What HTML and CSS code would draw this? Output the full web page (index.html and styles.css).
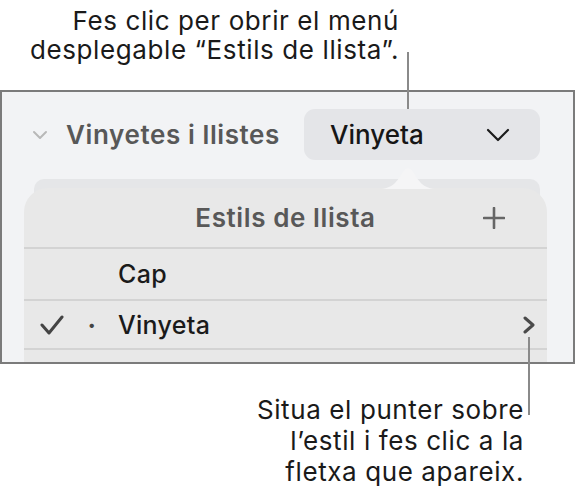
FILE: index.html
```html
<!DOCTYPE html>
<html lang="ca">

<head>
    <meta charset="UTF-8">
    <meta name="viewport" content="width=device-width, initial-scale=1.0">
    <title>Estils de llista</title>
    <link rel="stylesheet" href="styles.css">
</head>

<body>

    <div class="shot">
        <div class="callout callout-top">
            <p>Fes clic per obrir el menú<br>desplegable “Estils de llista”.</p>
        </div>

        <div class="frame">
            <div class="section-head">
                <svg class="disclosure" width="16" height="10" viewBox="0 0 16 10">
                    <path d="M2 2 L8 8 L14 2" fill="none" stroke="#b8b8b8" stroke-width="2" stroke-linecap="round" stroke-linejoin="round"/>
                </svg>
                <span class="section-title">Vinyetes i llistes</span>
                <div class="popup">
                    <span>Vinyeta</span>
                    <svg width="24" height="14" viewBox="0 0 24 14">
                        <path d="M2 2 L12 12 L22 2" fill="none" stroke="#1c1c1c" stroke-width="2.2" stroke-linecap="round" stroke-linejoin="round"/>
                    </svg>
                </div>
            </div>

            <div class="popover">
                <svg class="tip" width="58" height="22" viewBox="0 0 58 22">
                    <path d="M0 22 C14 22 18 14 24 5 C27 0 31 0 34 5 C40 14 44 22 58 22 Z" fill="#f5f5f6"/>
                </svg>
                <div class="card-back"></div>
                <div class="card">
                    <div class="card-head">
                        <span class="card-title">Estils de llista</span>
                        <svg class="plus" width="22" height="22" viewBox="0 0 22 22">
                            <path d="M11 1 V21 M1 11 H21" stroke="#666" stroke-width="2.6" stroke-linecap="round"/>
                        </svg>
                    </div>
                    <div class="row">
                        <span class="mark"></span>
                        <span class="bullet"></span>
                        <span class="label">Cap</span>
                    </div>
                    <div class="row row-short">
                        <svg class="mark" width="24" height="20" viewBox="0 0 24 20">
                            <path d="M2 10 L9 18 L22 2" fill="none" stroke="#444" stroke-width="3" stroke-linecap="round" stroke-linejoin="round"/>
                        </svg>
                        <span class="bullet">•</span>
                        <span class="label">Vinyeta</span>
                        <svg class="more" width="14" height="18" viewBox="0 0 14 18">
                            <path d="M3 2 L11 9 L3 16" fill="none" stroke="#4a4a4a" stroke-width="3" stroke-linecap="round" stroke-linejoin="round"/>
                        </svg>
                    </div>
                    <div class="row"></div>
                </div>
            </div>
        </div>

        <div class="callout callout-bottom">
            <p>Situa el punter sobre<br>l’estil i fes clic a la<br>fletxa que apareix.</p>
        </div>

        <!-- leader lines sit on top of the frame -->
        <span class="leader leader-top"></span>
        <span class="leader leader-bottom"></span>
    </div>

</body>

</html>
```

FILE: styles.css
```css
/* Page */
body {
    margin: 0;
    padding: 0;
    background-color: #fff;
    font-family: Inter, Roboto, 'Liberation Sans', sans-serif;
    color: #1a1a1a;
}

.shot {
    position: relative;
    width: 575px;
    height: 495px;
    overflow: hidden;
}

/* Callout texts */
.callout p {
    margin: 0;
    font-size: 26px;
    letter-spacing: 0.6px;
    line-height: 29px;
    text-align: right;
}

.callout-top {
    height: 90px;
    box-sizing: border-box;
    padding-top: 6px;
    width: 399px;
}

.callout-bottom {
    width: 524px;
    padding-top: 30px;
}

.callout-bottom p {
    line-height: 31px;
}

.leader {
    position: absolute;
    width: 2px;
    background-color: #8a8a8a;
}

.leader-top {
    left: 407px;
    top: 52px;
    height: 57px;
}

.leader-bottom {
    left: 528px;
    top: 337px;
    height: 78px;
}

/* Screenshot frame */
.frame {
    height: 274px;
    box-sizing: border-box;
    border: 2px solid #7b7b7b;
    background-color: #f2f3f5;
    overflow: hidden;
}

.section-head {
    display: flex;
    align-items: center;
    padding-top: 17px;
    height: 51px;
}

.disclosure {
    margin-left: 30px;
    margin-right: 18px;
}

.section-title {
    font-size: 26px;
    font-weight: 600;
    letter-spacing: 0.6px;
    color: #585858;
    width: 238px;
}

.popup {
    width: 236px;
    height: 51px;
    box-sizing: border-box;
    border-radius: 11px;
    background-color: #e4e5e8;
    display: flex;
    align-items: center;
    justify-content: space-between;
    padding: 0 30px 0 26px;
    font-size: 26px;
    font-weight: 500;
    color: #161616;
}

/* Popover */
.popover {
    position: relative;
    padding-top: 19px;
}

.tip {
    position: absolute;
    left: 377px;
    top: 7px;
    z-index: 2;
}

.card-back {
    height: 20px;
    margin: 0 33px 0 32px;
    border-radius: 10px 10px 0 0;
    background-color: #e5e6e8;
}

.card {
    position: relative;
    margin: -11px 26px 0 22px;
    border-radius: 24px 24px 0 0;
    background-color: #e8e8e8;
}

.card-head {
    height: 59px;
    display: flex;
    align-items: center;
    justify-content: center;
    position: relative;
}

.card-title {
    font-size: 26px;
    font-weight: 600;
    letter-spacing: 0.6px;
    color: #585858;
}

.plus {
    position: absolute;
    right: 42px;
    top: 19px;
}

.row {
    height: 50px;
    border-top: 2px solid #d3d3d3;
    display: flex;
    align-items: center;
    font-size: 25px;
    font-weight: 500;
    letter-spacing: 0.3px;
    color: #1a1a1a;
}

.row-short {
    height: 47px;
}

.mark {
    width: 24px;
    margin-left: 16px;
}

.bullet {
    width: 12px;
    margin-left: 24px;
    font-size: 14px;
    color: #444;
}

.label {
    margin-left: 18px;
    flex: 1;
}

.more {
    margin-right: 11px;
}
```
